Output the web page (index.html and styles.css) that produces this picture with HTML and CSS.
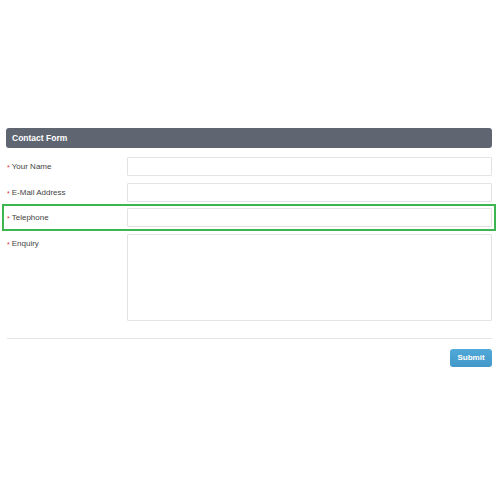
FILE: index.html
```html
<!DOCTYPE html>
<html lang="en">
<head>
  <meta charset="UTF-8" />
  <title>Contact Form</title>
  <link rel="stylesheet" href="styles.css">
</head>
<body>

<div class="page">
  <div class="panel-head">Contact Form</div>

  <form class="contact-form">
    <div class="row">
      <label class="req">Your Name</label>
      <input type="text" class="field">
    </div>
    <div class="row">
      <label class="req">E-Mail Address</label>
      <input type="text" class="field">
    </div>
    <div class="row row-focus">
      <label class="req">Telephone</label>
      <input type="text" class="field">
    </div>
    <div class="row">
      <label class="req">Enquiry</label>
      <textarea class="field area"></textarea>
    </div>

    <div class="actions">
      <button type="button" class="btn">Submit</button>
    </div>
  </form>
</div>

</body>
</html>
```

FILE: styles.css
```css
html, body {
  margin: 0;
  padding: 0;
  background: #fff;
  font-family: "Liberation Sans", Arial, sans-serif;
}

.page {
  padding: 128px 8px 0 6px;
}

.panel-head {
  height: 20px;
  line-height: 20px;
  padding-left: 6px;
  background: #5f6672;
  border-radius: 3px;
  color: #fff;
  font-weight: bold;
  font-size: 8.5px;
}

.contact-form {
  margin-top: 9px;
  display: flex;
  flex-direction: column;
  gap: 6.7px;
}

.row {
  display: flex;
  align-items: flex-start;
}

.row-focus {
  outline: 2px solid #3db651;
  outline-offset: 2px;
}

.req {
  width: 120px;
  flex-shrink: 0;
  line-height: 19px;
  font-size: 8px;
  color: #444;
  padding-left: 1px;
}

.req::before {
  content: "*";
  color: #e0303a;
  font-size: 7px;
  margin-right: 2px;
  position: relative;
  top: 1px;
}

.field {
  flex: 1;
  height: 19px;
  box-sizing: border-box;
  margin: 0;
  border: 1px solid #e3e3e3;
  border-radius: 1px;
  background: #fff;
  font: inherit;
}

.area {
  height: 87px;
  resize: none;
}

.actions {
  margin-top: 10px;
  padding-top: 10px;
  border-top: 1px solid #e6e6e6;
  display: flex;
  justify-content: flex-end;
  margin-left: 1px;
}

.btn {
  width: 42px;
  height: 18px;
  padding: 0;
  border: none;
  border-radius: 3px;
  background: linear-gradient(#50a9d8, #4298c9);
  color: #fff;
  font-family: inherit;
  font-weight: bold;
  font-size: 8px;
  cursor: pointer;
}
```
